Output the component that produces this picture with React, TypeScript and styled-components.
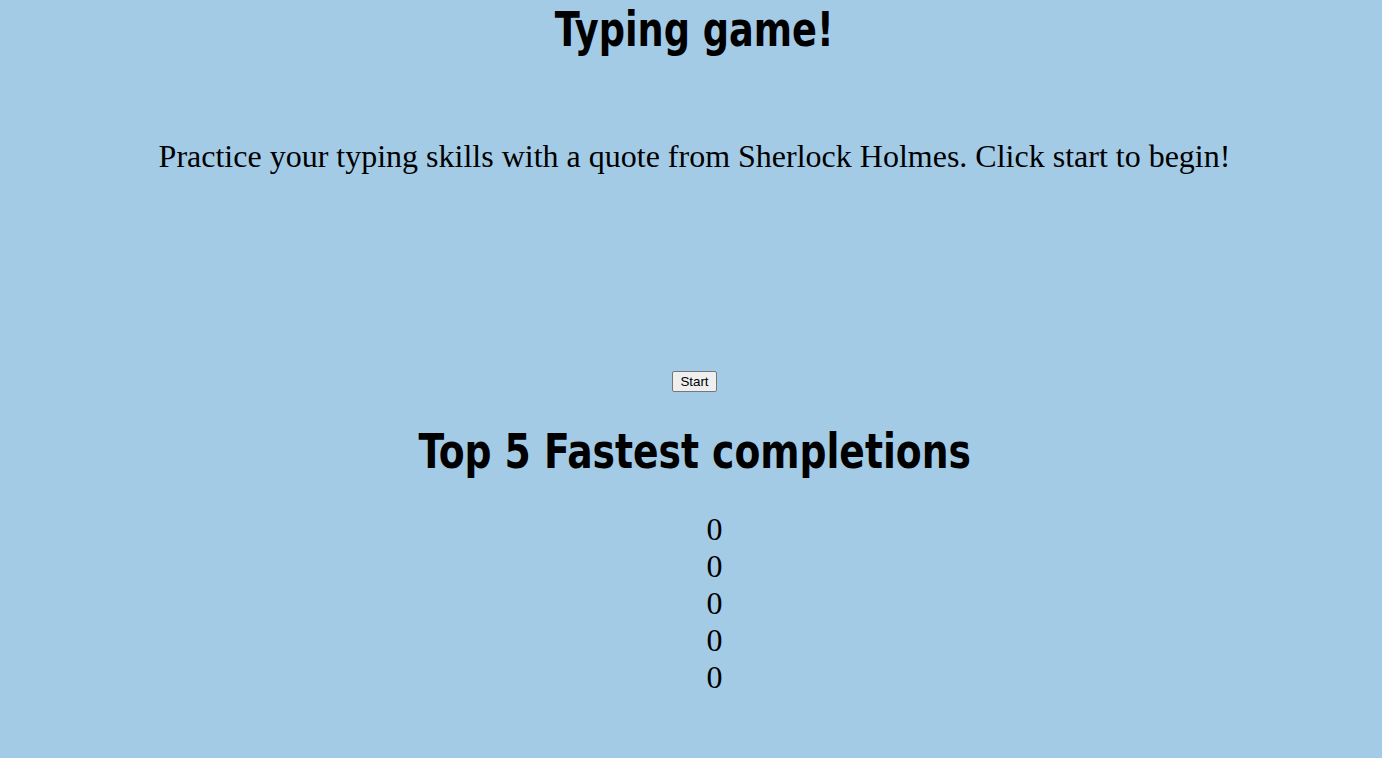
import React from "react";
import styled, { createGlobalStyle } from "styled-components";

const Global = createGlobalStyle`
  html, body { background: #a4cbe6; }
  body { margin: 0; padding: 0 0 0 7px; font-family: "Liberation Serif", "Times New Roman", serif; color: #000; }
`;

const Page = styled.main`
  display: flex;
  flex-direction: column;
  align-items: center;
  text-align: center;
`;

const Heading = styled.h1<{ $top: number; $squeeze: number }>`
  font-family: "DejaVu Sans Condensed", "Liberation Sans", sans-serif;
  font-weight: 700;
  font-size: 48px;
  margin: ${(p) => p.$top}px 0 0;
  line-height: 1.15;
  display: inline-block;
  transform: scaleX(${(p) => p.$squeeze});
`;

const Intro = styled.p`
  font-size: 32px;
  margin: 81px 0 0;
  line-height: 1.15;
`;

const Quote = styled.div`
  height: 196px;
`;

const StartButton = styled.button`
  font-family: "Liberation Sans", Arial, sans-serif;
  font-size: 13.333px;
  padding: 2px 7px;
  background: #efefef;
  border: 1px solid #767676;
  border-radius: 2px;
  color: #000;
`;

const Scores = styled.ul`
  list-style: none;
  margin: 32px 0 0;
  padding: 0 0 0 40px;
  align-self: stretch;
  text-align: center;
`;

const Score = styled.li`
  font-size: 32px;
  line-height: 37px;
`;

export default function App() {
  const scores = [0, 0, 0, 0, 0];
  return (
    <>
      <Global />
      <Page>
        <Heading $top={2} $squeeze={0.85}>Typing game!</Heading>
        <Intro>Practice your typing skills with a quote from Sherlock Holmes. Click start to begin!</Intro>
        <Quote />
        <StartButton>Start</StartButton>
        <Heading as="h2" $top={32} $squeeze={0.872}>Top 5 Fastest completions</Heading>
        <Scores>
          {scores.map((s, i) => (
            <Score key={i}>{s}</Score>
          ))}
        </Scores>
      </Page>
    </>
  );
}
